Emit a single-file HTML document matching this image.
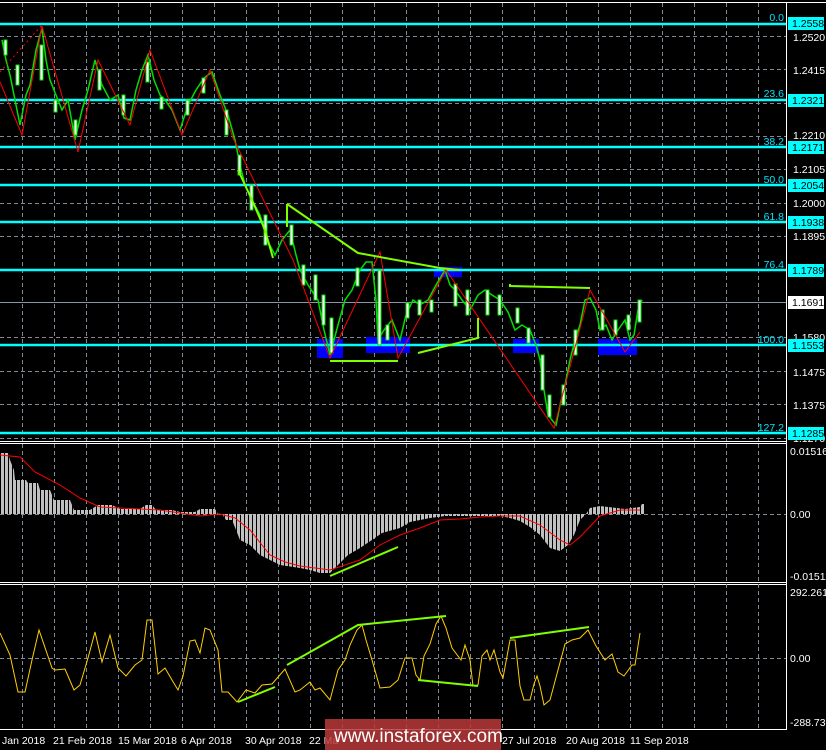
<!DOCTYPE html>
<html><head><meta charset="utf-8"><style>
html,body{margin:0;padding:0;background:#000;width:826px;height:750px;overflow:hidden}
svg{display:block}
text{font-family:"Liberation Sans",sans-serif;font-size:10.5px;fill:#fff}
text.k{fill:#000}
text.c{fill:#00e5ff}
text.w{fill:#fff;font-size:19px}
</style></head><body>
<svg width="826" height="750" viewBox="0 0 826 750" xmlns="http://www.w3.org/2000/svg">
<defs>
<pattern id="bars" width="4" height="10" patternUnits="userSpaceOnUse" x="1"><rect x="0" y="0" width="3" height="10" fill="#c0c0c0"/></pattern>
</defs>
<rect width="826" height="750" fill="#000"/>
<line x1="0" y1="2.5" x2="826" y2="2.5" stroke="#fff"/>
<line x1="786.5" y1="2" x2="786.5" y2="729" stroke="#fff"/>
<line x1="0" y1="441.5" x2="787" y2="441.5" stroke="#fff"/>
<line x1="0" y1="443.5" x2="787" y2="443.5" stroke="#fff"/>
<line x1="0" y1="582.5" x2="787" y2="582.5" stroke="#fff"/>
<line x1="0" y1="584.5" x2="787" y2="584.5" stroke="#fff"/>
<line x1="0" y1="729.5" x2="787" y2="729.5" stroke="#fff"/>
<g stroke="#7f8a99" stroke-dasharray="4,3" stroke-width="1">
<path d="M22.5 3V729M54.5 3V729M86.5 3V729M118.5 3V729M150.5 3V729M182.5 3V729M214.5 3V729M246.5 3V729M278.5 3V729M310.5 3V729M342.5 3V729M374.5 3V729M406.5 3V729M438.5 3V729M470.5 3V729M502.5 3V729M534.5 3V729M566.5 3V729M598.5 3V729M630.5 3V729M662.5 3V729M694.5 3V729M726.5 3V729M758.5 3V729"/>
<path d="M0 36.5H786M0 69.5H786M0 103.5H786M0 136.5H786M0 169.5H786M0 203.5H786M0 236.5H786M0 270.5H786M0 337.5H786M0 371.5H786M0 404.5H786M0 438.5H786M0 514.5H786M0 658.5H786"/>
</g>
<line x1="0" y1="302.5" x2="786" y2="302.5" stroke="#8a96a6"/>
<g fill="#0000ff">
<rect x="317" y="339" width="26" height="19"/><rect x="366" y="337" width="44" height="16"/><rect x="434" y="267" width="28" height="10"/><rect x="513" y="339" width="26" height="14"/><rect x="598" y="339" width="39" height="16"/>
</g>
<g stroke="#00ffff" stroke-width="2.5">
<path d="M0 24H786M0 100H786M0 147H786M0 185H786M0 222H786M0 270H786M0 345H786M0 433H786"/>
</g>
<polyline fill="none" stroke="#00e000" stroke-width="1.5" points="2,40 6,60 10,75 14,95 20,125 26,95 30,85 36,50 42,28 46,60 50,80 56,95 62,110 68,100 75,140 82,110 88,90 95,60 102,85 110,100 118,95 124,118 130,120 136,90 142,70 148,55 154,80 160,95 165,100 172,110 180,130 188,105 196,90 204,78 212,72 220,95 228,115 235,140 240,165 245,185 252,200 260,215 267,240 275,255 282,240 290,230 296,255 300,270 308,285 318,300 324,330 330,355 338,325 345,300 352,290 360,270 366,262 372,262 376,300 378,340 384,330 392,320 400,340 406,315 413,300 420,305 428,300 436,285 445,270 450,285 455,290 462,300 470,310 478,295 485,290 492,295 500,300 508,312 515,330 522,325 530,330 536,345 540,360 544,390 548,415 552,420 556,425 560,405 565,385 570,360 575,340 580,325 585,300 590,298 596,310 600,330 606,325 612,340 618,330 625,320 630,340 634,335 638,310 642,300"/>
<g fill="#fff" stroke="#00e000" stroke-width="1">
<rect x="4" y="40" width="3" height="15"/><rect x="16" y="65" width="3" height="20"/><rect x="40" y="45" width="3" height="35"/><rect x="54" y="100" width="3" height="12"/><rect x="74" y="120" width="3" height="15"/><rect x="98" y="70" width="3" height="20"/><rect x="122" y="95" width="3" height="20"/><rect x="146" y="62" width="3" height="20"/><rect x="160" y="97" width="3" height="12"/><rect x="186" y="100" width="3" height="15"/><rect x="202" y="78" width="3" height="15"/><rect x="225" y="110" width="3" height="25"/><rect x="238" y="155" width="3" height="20"/><rect x="250" y="185" width="3" height="25"/><rect x="264" y="215" width="3" height="30"/><rect x="290" y="225" width="3" height="20"/><rect x="302" y="265" width="3" height="20"/><rect x="314" y="275" width="3" height="25"/><rect x="322" y="295" width="3" height="30"/><rect x="330" y="318" width="3" height="35"/><rect x="356" y="268" width="3" height="18"/><rect x="378" y="270" width="3" height="75"/><rect x="386" y="325" width="3" height="15"/><rect x="406" y="303" width="3" height="15"/><rect x="418" y="300" width="3" height="15"/><rect x="430" y="300" width="3" height="12"/><rect x="454" y="284" width="3" height="22"/><rect x="466" y="290" width="3" height="25"/><rect x="486" y="290" width="3" height="25"/><rect x="498" y="295" width="3" height="20"/><rect x="516" y="308" width="3" height="15"/><rect x="527" y="328" width="3" height="15"/><rect x="541" y="355" width="3" height="35"/><rect x="548" y="395" width="3" height="22"/><rect x="562" y="385" width="3" height="20"/><rect x="574" y="330" width="3" height="25"/><rect x="601" y="310" width="3" height="20"/><rect x="614" y="320" width="3" height="15"/><rect x="627" y="315" width="3" height="15"/><rect x="638" y="300" width="3" height="22"/>
</g>
<polyline fill="none" stroke="#ff0000" stroke-width="1" points="0,82 22,135 42,26 78,152 98,60 130,125 150,50 182,135 210,70 233,138 293,260 330,358 380,252 398,358 446,270 554,428 590,290 625,352 640,332"/>
<polyline fill="none" stroke="#ff0000" stroke-width="1" stroke-dasharray="2,3" points="0,72 42,25"/>
<g fill="none" stroke="#80ff00" stroke-width="2">
<polyline points="238,170 252,200 265,230 273,258"/>
<polyline points="287,204 358,253 440,268 460,270"/>
<polyline points="330,361 398,361"/>
<polyline points="418,353 478,338 478,318"/>
<polyline points="510,284 510,286 590,288"/>
<line x1="287" y1="204" x2="287" y2="227"/>
</g>
<g text-anchor="end">
<text class="c" x="784" y="21">0.0</text><text class="c" x="784" y="97">23.6</text><text class="c" x="784" y="145">38.2</text><text class="c" x="784" y="183">50.0</text><text class="c" x="784" y="220">61.8</text><text class="c" x="784" y="268">76.4</text><text class="c" x="784" y="343">100.0</text><text class="c" x="784" y="431">127.2</text>
</g>
<text x="793" y="41">1.2520</text><text x="793" y="74">1.2415</text><text x="793" y="139">1.2210</text><text x="793" y="173">1.2105</text><text x="793" y="207">1.2000</text><text x="793" y="240">1.1895</text><text x="793" y="341">1.1580</text><text x="793" y="376">1.1475</text><text x="793" y="409">1.1375</text><text x="793" y="442">1.1270</text>
<g fill="#00ffff">
<rect x="788" y="17" width="36" height="13"/><rect x="788" y="94" width="36" height="13"/><rect x="788" y="141" width="36" height="13"/><rect x="788" y="179" width="36" height="13"/><rect x="788" y="216" width="36" height="13"/><rect x="788" y="264" width="36" height="13"/><rect x="788" y="339" width="36" height="13"/><rect x="788" y="427" width="36" height="13"/>
</g>
<rect x="788" y="296" width="36" height="13" fill="#fff"/>
<text class="k" x="792" y="27">1.2558</text><text class="k" x="792" y="104">1.2321</text><text class="k" x="792" y="151">1.2171</text><text class="k" x="792" y="189">1.2054</text><text class="k" x="792" y="226">1.1938</text><text class="k" x="792" y="274">1.1789</text><text class="k" x="792" y="306">1.1691</text><text class="k" x="792" y="349">1.1553</text><text class="k" x="792" y="437">1.1285</text>
<polygon fill="url(#bars)" points="1,514 1,453 8,453 10,460 14,470 15,480 26,480 28,483 38,483 40,490 50,490 54,500 70,500 74,510 90,510 98,505 112,505 120,509 140,509 146,505 152,505 156,510 172,510 180,512 195,512 200,509 215,509 218,514 222,514 226,520 232,520 240,540 250,545 260,555 270,560 280,565 300,568 310,570 320,573 330,573 338,565 348,555 360,548 372,540 382,533 400,528 410,522 430,518 445,516 500,516 510,518 520,521 530,527 540,535 550,548 560,551 568,545 574,535 580,520 586,514 590,508 600,506 625,509 640,507 642,504 645,504 645,514"/>
<polyline fill="none" stroke="#ff0000" stroke-width="1" points="0,455 20,457 35,472 60,485 80,498 100,507 120,508 160,510 200,516 220,514 235,518 250,530 270,555 285,562 300,566 330,570 360,560 380,545 400,535 420,528 440,520 460,519 480,517 500,516 520,516 540,525 560,540 570,545 580,537 600,516 620,510 640,510"/>
<line x1="330" y1="576" x2="398" y2="547" stroke="#80ff00" stroke-width="2"/>
<text x="790" y="455">0.01516</text><text x="790" y="518">0.00</text><text x="790" y="580">-0.01511</text>
<polyline fill="none" stroke="#ffd000" stroke-width="1" points="0,633 10,655 18,692 25,692 32,660 39,630 52,668 55,670 65,669 74,690 80,685 88,658 95,632 102,662 110,635 118,668 126,676 135,665 142,660 147,620 152,620 158,674 165,668 172,680 178,690 183,676 190,641 195,640 200,653 205,628 210,630 218,650 222,692 228,692 237,702 246,690 255,693 262,685 272,684 285,669 295,692 300,690 310,682 315,690 320,688 330,700 338,670 345,660 350,645 357,630 362,625 366,640 372,660 380,688 390,687 398,680 405,658 412,658 416,675 420,680 424,656 430,644 436,624 441,616 446,628 452,648 461,660 465,645 470,660 473,686 478,685 482,656 487,650 490,660 494,650 500,672 503,678 510,640 515,640 520,686 524,700 530,700 534,684 537,676 540,686 544,705 550,700 558,670 565,644 572,640 580,638 588,630 596,646 605,660 612,654 618,672 624,676 632,665 635,665 640,633"/>
<g fill="none" stroke="#80ff00" stroke-width="2">
<line x1="238" y1="702" x2="275" y2="687"/>
<polyline points="287,665 358,625 446,616"/>
<line x1="418" y1="680" x2="478" y2="686"/>
<polyline points="510,638 589,627"/>
</g>
<text x="790" y="596">292.2615</text><text x="790" y="662">0.00</text><text x="790" y="726">-288.730</text>
<text x="2" y="744">Jan 2018</text><text x="53" y="744">21 Feb 2018</text><text x="118" y="744">15 Mar 2018</text><text x="181" y="744">6 Apr 2018</text><text x="245" y="744">30 Apr 2018</text><text x="309" y="744">22 Ma</text><text x="502" y="744">27 Jul 2018</text><text x="566" y="744">20 Aug 2018</text><text x="630" y="744">11 Sep 2018</text>
<rect x="325" y="719" width="176" height="31" fill="#b83a3a" fill-opacity="0.85"/>
<text class="w" x="334" y="742">www.instaforex.com</text>
</svg>
</body></html>
